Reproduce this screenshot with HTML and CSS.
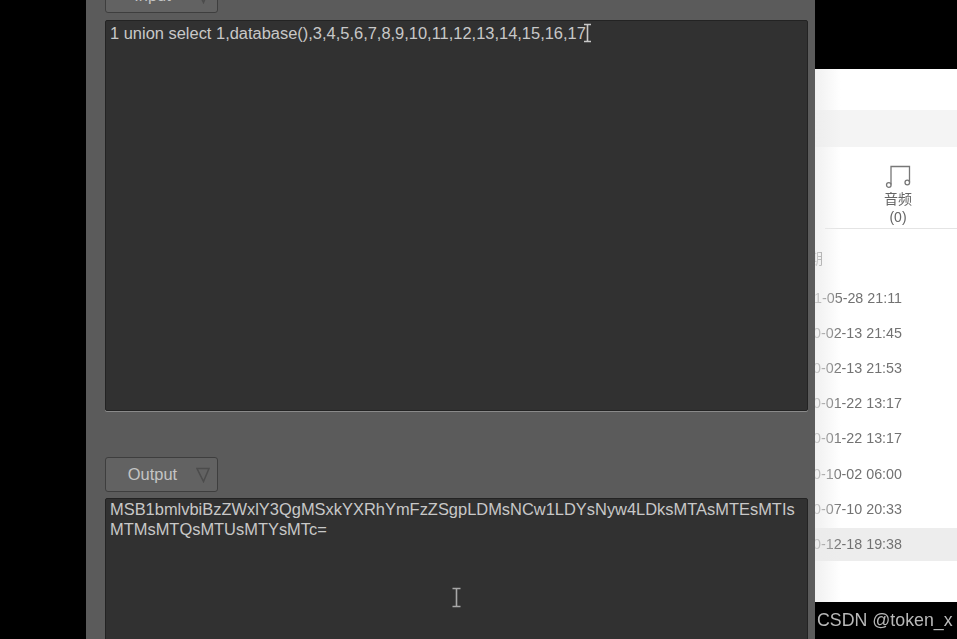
FILE: index.html
```html
<!DOCTYPE html>
<html lang="zh">
<head>
<meta charset="utf-8">
<title>Base64</title>
<link rel="stylesheet" href="styles.css">
</head>
<body>
<div class="stage">
  <div class="gutter"></div>
  <main class="dialog">
    <button class="pick pick-input"><span>Input</span><svg class="tri" width="14" height="16" viewBox="0 0 14 16"><path d="M1 1.500H13L7.500 14.500Z"/></svg></button>
    <div class="box box-input">1 union select 1,database(),3,4,5,6,7,8,9,10,11,12,13,14,15,16,17<svg class="caret caret-a" width="9" height="20" viewBox="0 0 9 20"><path d="M1 1.500H8M4.500 1.500V18.500M1 18.500H8"/></svg></div>
    <button class="pick pick-output"><span>Output</span><svg class="tri" width="14" height="16" viewBox="0 0 14 16"><path d="M1 1.500H13L7.500 14.500Z"/></svg></button>
    <div class="box box-output">MSB1bmlvbiBzZWxlY3QgMSxkYXRhYmFzZSgpLDMsNCw1LDYsNyw4LDksMTAsMTEsMTIs<br>MTMsMTQsMTUsMTYsMTc=<svg class="caret caret-b" width="11" height="21" viewBox="0 0 11 21"><path d="M1.500 1.500H9.500M5.500 1.500V19.500M1.500 19.500H9.500"/></svg></div>
  </main>
  <aside class="side">
    <div class="side-top"></div>
    <section class="sheet">
      <div class="sheet-head"></div>
      <div class="sheet-strip"></div>
      <div class="tabs">
        <div class="tab">
          <svg width="26" height="25" viewBox="0 0 26 25"><path d="M6 19.500V1.500H24.500V17"/><circle cx="3.800" cy="20" r="2.300"/><circle cx="22.300" cy="17.500" r="2.300"/></svg>
          <span class="tab-name">音频</span>
          <span class="tab-count">(0)</span>
        </div>
      </div>
      <div class="row row-head"><span>日期</span></div>
      <div class="row"><span>2021-05-28 21:11</span></div>
      <div class="row"><span>2020-02-13 21:45</span></div>
      <div class="row"><span>2020-02-13 21:53</span></div>
      <div class="row"><span>2020-01-22 13:17</span></div>
      <div class="row"><span>2020-01-22 13:17</span></div>
      <div class="row"><span>2020-10-02 06:00</span></div>
      <div class="row"><span>2020-07-10 20:33</span></div>
      <div class="row row-on"><span>2020-12-18 19:38</span></div>
      <div class="fade"></div>
    </section>
    <footer class="mark">CSDN @token_x</footer>
  </aside>
</div>
</body>
</html>
```
FILE: styles.css
```css
html, body {
  margin: 0;
  height: 100%;
  background: #000;
  overflow: hidden;
}
body, button {
  font-family: "Liberation Sans", Arial, sans-serif;
}
.stage {
  display: flex;
  width: 957px;
  height: 639px;
  overflow: hidden;
  filter: blur(0.45px);
}
.gutter {
  width: 86px;
  flex: none;
}
.dialog {
  width: 729px;
  height: 639px;
  flex: none;
  box-sizing: border-box;
  padding: 0 7px 0 19px;
  background: #5b5b5b;
  display: flex;
  flex-direction: column;
  align-items: flex-start;
  overflow: hidden;
}
.pick {
  width: 113px;
  height: 35px;
  flex: none;
  box-sizing: border-box;
  padding: 0 7px 0 0;
  display: flex;
  align-items: center;
  background: #626262;
  border: 1px solid #3e3e3e;
  border-radius: 3px;
  color: #c4c4c4;
  font-size: 16.450px;
}
.pick span {
  flex: 1;
  text-align: center;
  padding-left: 3px;
}
.tri path {
  fill: none;
  stroke: #4c4c4c;
  stroke-width: 1.5;
}
.pick-input {
  margin-top: -22px;
}
.pick-output {
  margin-top: 46px;
}
.box {
  position: relative;
  flex: none;
  width: 703px;
  box-sizing: border-box;
  padding: 2px 4px;
  background: #313131;
  border: 1px solid #232323;
  border-radius: 2px;
  color: #c8c8c8;
  font-size: 16.450px;
  line-height: 20px;
  white-space: nowrap;
}
.box-input {
  height: 391px;
  margin-top: 7px;
  box-shadow: 0 1px 0 #8a8a8a;
}
.box-output {
  height: 160px;
  margin-top: 6px;
  padding-top: 1px;
  line-height: 19.500px;
}
.caret {
  position: absolute;
  fill: none;
  stroke-width: 1.6;
}
.caret-a {
  left: 477px;
  top: 2px;
  stroke: #c8c8c8;
}
.caret-b {
  left: 345px;
  top: 88px;
  stroke: #a8a8a8;
}
.side {
  width: 142px;
  flex: none;
  display: flex;
  flex-direction: column;
}
.side-top {
  height: 69px;
  flex: none;
}
.sheet {
  position: relative;
  height: 533px;
  flex: none;
  background: #fff;
  overflow: hidden;
}
.sheet-head {
  height: 41px;
}
.sheet-strip {
  height: 37px;
  background: #f4f4f4;
}
.tabs {
  height: 82px;
  margin-left: 10px;
  box-sizing: border-box;
  border-bottom: 1px solid #e4e4e4;
}
.tab {
  width: 146px;
  padding-top: 18px;
  display: flex;
  flex-direction: column;
  align-items: center;
  color: #666;
  font-size: 14px;
  line-height: 18px;
}
.tab svg {
  fill: none;
  stroke: #777;
  stroke-width: 1.3;
  display: block;
}
.tab-name {
  font-family: "Liberation Sans", "Noto Sans CJK SC", sans-serif;
}
.row {
  height: 35.200px;
  display: flex;
  justify-content: flex-end;
  align-items: center;
  padding-right: 55px;
  overflow: hidden;
  white-space: nowrap;
  color: #727272;
  font-size: 14.300px;
}
.row-head {
  height: 51px;
  padding-right: 134px;
  padding-top: 6px;
  box-sizing: border-box;
  font-family: "Liberation Sans", "Noto Sans CJK SC", sans-serif;
}
.row-on {
  height: 33px;
  margin-top: 1.200px;
  background: #ededed;
}
.fade {
  position: absolute;
  inset: 0 auto 0 0;
  width: 26px;
  background: linear-gradient(to right, rgba(235,235,235,.75), rgba(255,255,255,0));
}
.mark {
  flex: 1;
  padding: 8px 0 0 2px;
  color: #b9b9b9;
  font-size: 17.800px;
  white-space: nowrap;
}
```
